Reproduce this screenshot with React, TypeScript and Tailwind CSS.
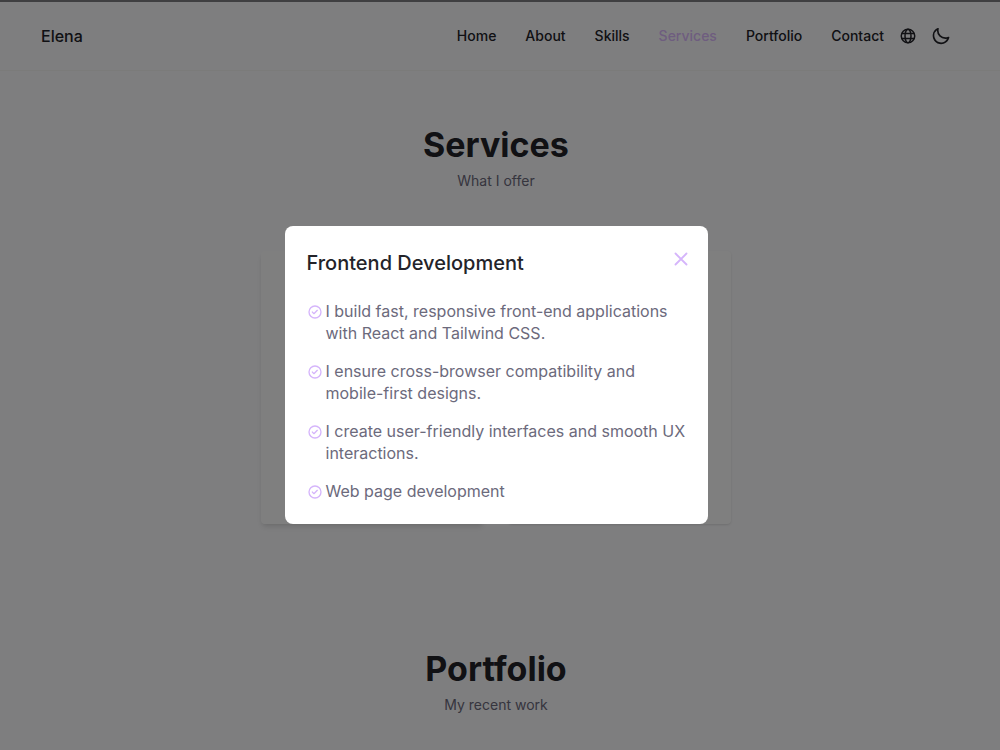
import React from "react";

type NavLink = {
  label: string;
  href: string;
};

type SectionTitleProps = {
  title: string;
  subtitle: string;
};

type ServiceModalProps = {
  title: string;
  items: string[];
};

const navLinks: NavLink[] = [
  { label: "Home", href: "#home" },
  { label: "About", href: "#about" },
  { label: "Skills", href: "#skills" },
  { label: "Services", href: "#services" },
  { label: "Portfolio", href: "#portfolio" },
  { label: "Contact", href: "#contact" },
];

const frontendItems = [
  "I build fast, responsive front-end applications with React and Tailwind CSS.",
  "I ensure cross-browser compatibility and mobile-first designs.",
  "I create user-friendly interfaces and smooth UX interactions.",
  "Web page development",
];

const CheckIcon: React.FC = () => (
  <svg className="mt-1 h-4 w-4 shrink-0 text-[#d5b5fb]" viewBox="0 0 24 24" fill="currentColor" aria-hidden="true">
    <path d="M14.72,8.79l-4.29,4.3L8.78,11.44a1,1,0,1,0-1.41,1.41l2.35,2.36a1,1,0,0,0,.71.29,1,1,0,0,0,.7-.29l5-5a1,1,0,0,0,0-1.42A1,1,0,0,0,14.72,8.79ZM12,2A10,10,0,1,0,22,12,10,10,0,0,0,12,2Zm0,18a8,8,0,1,1,8-8A8,8,0,0,1,12,20Z" />
  </svg>
);

const GlobeIcon: React.FC = () => (
  <svg className="h-[18px] w-[18px]" viewBox="0 0 24 24" fill="none" stroke="currentColor" strokeWidth="2" aria-hidden="true">
    <circle cx="12" cy="12" r="9" />
    <ellipse cx="12" cy="12" rx="4" ry="9" />
    <path d="M3.8 8.7h16.4M3.8 15.3h16.4" />
  </svg>
);

const MoonIcon: React.FC = () => (
  <svg className="h-5 w-5" viewBox="0 0 24 24" fill="currentColor" aria-hidden="true">
    <path d="M21.64,13a1,1,0,0,0-1.05-.14,8.05,8.05,0,0,1-3.37.73A8.15,8.15,0,0,1,9.08,5.49a8.59,8.59,0,0,1,.25-2A1,1,0,0,0,8,2.36,10.14,10.14,0,1,0,22,14.05,1,1,0,0,0,21.64,13Zm-9.5,6.69A8.14,8.14,0,0,1,7.08,5.22v.27A10.15,10.15,0,0,0,17.22,15.63a9.79,9.79,0,0,0,2.1-.22A8.11,8.11,0,0,1,12.14,19.73Z" />
  </svg>
);

const Header: React.FC = () => (
  <header className="border-b border-[#f6f6f4] bg-[#fdfdff]">
    <div className="flex h-[68px] items-center justify-between pr-[49px] pl-[41px]">
      <a href="#home" className="text-[16px] font-medium">
        Elena
      </a>
      <div className="flex items-center">
        <nav className="flex gap-[29px] text-[14px] leading-5 font-medium">
          {navLinks.map((link) => (
            <a key={link.label} href={link.href} className={link.label === "Services" ? "text-[#ddbaff]" : ""}>
              {link.label}
            </a>
          ))}
        </nav>
        <button type="button" aria-label="Change language" className="ml-[15px]">
          <GlobeIcon />
        </button>
        <button type="button" aria-label="Toggle dark mode" className="ml-[14px]">
          <MoonIcon />
        </button>
      </div>
    </div>
  </header>
);

const SectionTitle: React.FC<SectionTitleProps> = ({ title, subtitle }) => (
  <div className="text-center">
    <h2 className="text-[34px] leading-[52px] font-bold">{title}</h2>
    <p className="text-[14px] leading-5 text-[#6c6a7c]">{subtitle}</p>
  </div>
);

const ServiceModal: React.FC<ServiceModalProps> = ({ title, items }) => (
  <div className="fixed inset-0 flex items-center justify-center bg-black/50 pr-2">
    <div
      role="dialog"
      aria-modal="true"
      aria-labelledby="service-title"
      className="w-[423px] rounded-lg bg-white py-[22px] pr-4 pl-[22px]"
    >
      <div className="flex items-start justify-between">
        <h3 id="service-title" className="text-[20px] leading-[30px] font-medium">
          {title}
        </h3>
        <button type="button" aria-label="Close" className="text-[#d5b5fb]">
          <svg className="h-[22px] w-[22px]" viewBox="0 0 24 24" fill="none" stroke="currentColor" strokeWidth="2" strokeLinecap="round">
            <path d="M6 6l12 12M18 6L6 18" />
          </svg>
        </button>
      </div>
      <ul className="mt-[22px] flex flex-col gap-4">
        {items.map((item) => (
          <li key={item} className="flex gap-[3px]">
            <CheckIcon />
            <p className="text-[16px] leading-[22px] text-[#6c6a7c]">{item}</p>
          </li>
        ))}
      </ul>
    </div>
  </div>
);

export default function App() {
  return (
    <div className="min-h-screen overflow-hidden border-t-2 border-[#7f7f82] bg-[#fdfdff] font-['Inter',sans-serif] text-[#232329]">
      <Header />
      <main className="pr-2">
        <section id="services" className="pt-12">
          <SectionTitle title="Services" subtitle="What I offer" />
          <div className="mx-auto mt-[60px] grid w-[470px] grid-cols-2 gap-6">
            <div className="h-[273px] rounded-sm bg-white shadow-md" />
            <div className="h-[273px] rounded-sm bg-white shadow-sm" />
          </div>
        </section>
        <section id="portfolio" className="pt-[119px]">
          <SectionTitle title="Portfolio" subtitle="My recent work" />
        </section>
      </main>
      <ServiceModal title="Frontend Development" items={frontendItems} />
    </div>
  );
}
